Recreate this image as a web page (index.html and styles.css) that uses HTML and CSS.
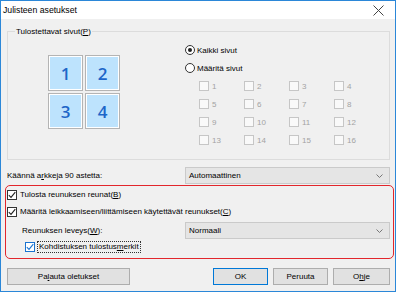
FILE: index.html
```html
<!DOCTYPE html>
<html>
<head>
<meta charset="utf-8">
<link rel="stylesheet" href="styles.css">
</head>
<body>
<div class="window">
  <div class="titlebar">
    <span class="title">Julisteen asetukset</span>
    <svg class="close" width="11" height="11" viewBox="0 0 11 11"><path d="M0.5 0.5L10.5 10.5M10.5 0.5L0.5 10.5" stroke="#444" stroke-width="1" fill="none"/></svg>
  </div>
  <div class="content">
    <fieldset class="group">
      <legend>Tulostettavat sivut(<u>P</u>)</legend>
      <div class="group-inner">
        <div class="poster">
          <div class="cell">1</div>
          <div class="cell">2</div>
          <div class="cell">3</div>
          <div class="cell">4</div>
        </div>
        <div class="pages">
          <div class="row"><span class="radio checked"></span>Kaikki sivut</div>
          <div class="row"><span class="radio"></span>Määritä sivut</div>
          <div class="page-grid">
            <div class="pcb"><span class="cb off"></span>1</div>
            <div class="pcb"><span class="cb off"></span>2</div>
            <div class="pcb"><span class="cb off"></span>3</div>
            <div class="pcb"><span class="cb off"></span>4</div>
            <div class="pcb"><span class="cb off"></span>5</div>
            <div class="pcb"><span class="cb off"></span>6</div>
            <div class="pcb"><span class="cb off"></span>7</div>
            <div class="pcb"><span class="cb off"></span>8</div>
            <div class="pcb"><span class="cb off"></span>9</div>
            <div class="pcb"><span class="cb off"></span>10</div>
            <div class="pcb"><span class="cb off"></span>11</div>
            <div class="pcb"><span class="cb off"></span>12</div>
            <div class="pcb"><span class="cb off"></span>13</div>
            <div class="pcb"><span class="cb off"></span>14</div>
            <div class="pcb"><span class="cb off"></span>15</div>
            <div class="pcb"><span class="cb off"></span>16</div>
          </div>
        </div>
      </div>
    </fieldset>
    <div class="rotate-row">
      <span>Käännä a<u>r</u>kkeja 90 astetta:</span>
      <div class="select">Automaattinen<svg class="chev" width="7" height="4" viewBox="0 0 7 4"><path d="M0.5 0.5L3.5 3.5L6.5 0.5" stroke="#777" stroke-width="1" fill="none"/></svg></div>
    </div>
    <div class="highlight">
      <div class="crow"><span class="cb on"><svg width="8" height="8" viewBox="0 0 8 8"><path d="M0.8 4.2L3 6.4L7.3 1.2" stroke="#222" stroke-width="1.1" fill="none"/></svg></span>Tulosta reunuksen reunat(<u>B</u>)</div>
      <div class="crow"><span class="cb on"><svg width="8" height="8" viewBox="0 0 8 8"><path d="M0.8 4.2L3 6.4L7.3 1.2" stroke="#222" stroke-width="1.1" fill="none"/></svg></span>Määritä leikkaamiseen/liittämiseen käytettävät reunukset(<u>C</u>)</div>
      <div class="width-row">
        <span>Reunuksen leveys(<u>W</u>):</span>
        <div class="select">Normaali<svg class="chev" width="7" height="4" viewBox="0 0 7 4"><path d="M0.5 0.5L3.5 3.5L6.5 0.5" stroke="#777" stroke-width="1" fill="none"/></svg></div>
      </div>
      <div class="crow sub"><span class="cb on blue"><svg width="8" height="8" viewBox="0 0 8 8"><path d="M0.8 4.2L3 6.4L7.3 1.2" stroke="#1a73d0" stroke-width="1.1" fill="none"/></svg></span><span class="focus">Kohdistuksen tulostus<u>m</u>erkit</span></div>
    </div>
    <div class="buttons">
      <button class="btn wide">Pa<u>l</u>auta oletukset</button>
      <div class="spacer"></div>
      <button class="btn default">OK</button>
      <button class="btn">Peruuta</button>
      <button class="btn last">O<u>h</u>je</button>
    </div>
  </div>
</div>
</body>
</html>
```
FILE: styles.css
```css
* { box-sizing: border-box; }
html, body { margin: 0; padding: 0; }
body {
  font-family: "Liberation Sans", Arial, sans-serif;
  font-size: 8px;
  color: #000;
  background: #fff;
}
.window {
  width: 396px;
  height: 292px;
  border: 1px solid #2b87d8;
  background: #f0f0f0;
  display: flex;
  flex-direction: column;
}
.titlebar {
  height: 18px;
  background: #fff;
  display: flex;
  align-items: center;
  justify-content: space-between;
  padding: 0 11px 0 2px;
  font-size: 8.7px;
}
.close { display: block; }
.content {
  padding: 7px 5px 0 6px;
  display: flex;
  flex-direction: column;
}
u { text-decoration: underline; text-underline-offset: 1px; }
.group {
  margin: 0;
  padding: 0 0 10px 0;
  border: 1px solid #dcdcdc;
  min-width: 0;
}
.group legend {
  margin-left: 7px;
  padding: 0 1px;
  line-height: 11px;
}
.group-inner {
  display: flex;
  align-items: flex-start;
}
.poster {
  margin: 18px 0 0 40px;
  display: grid;
  grid-template-columns: 35px 35px;
  grid-template-rows: 36px 36px;
  gap: 2px;
}
.cell {
  border: 1px solid #b4b4b4;
  box-shadow: inset 0 0 0 1px #fff;
  background: #bde3fd;
  color: #1e66c8;
  font-family: "Open Sans", "Noto Sans", sans-serif;
  font-weight: 600;
  font-size: 17px;
  display: flex;
  align-items: center;
  justify-content: center;
}
.pages {
  margin: 4px 0 0 65px;
  display: flex;
  flex-direction: column;
}
.row {
  height: 18px;
  display: flex;
  align-items: center;
}
.radio {
  width: 10px;
  height: 10px;
  border: 1px solid #333;
  border-radius: 50%;
  background: #fff;
  margin-right: 2px;
  display: flex;
  align-items: center;
  justify-content: center;
}
.radio.checked::after {
  content: "";
  width: 4px;
  height: 4px;
  border-radius: 50%;
  background: #222;
}
.page-grid {
  padding-left: 14px;
  display: grid;
  grid-template-columns: repeat(4, 45px);
  grid-auto-rows: 18px;
}
.pcb {
  display: flex;
  align-items: center;
  color: #a3a3a3;
}
.cb {
  width: 10px;
  height: 10px;
  border: 1px solid #333;
  background: #fff;
  margin-right: 3px;
  display: flex;
  align-items: center;
  justify-content: center;
  flex: none;
}
.cb svg { display: block; }
.cb.off { border-color: #c6c6c6; background: #f9f9f9; }
.cb.blue { border-color: #1a73d0; }
.rotate-row {
  margin-top: 7px;
  height: 17px;
  display: flex;
  align-items: center;
  justify-content: space-between;
}
.select {
  width: 205px;
  height: 17px;
  border: 1px solid #cacaca;
  background: #e5e5e5;
  display: flex;
  align-items: center;
  justify-content: space-between;
  padding: 0 6px 0 3px;
}
.chev { display: block; }
.highlight {
  margin: 1px -4px 0 -2px;
  border: 1px solid #e2262c;
  border-radius: 5px;
  padding: 0 3px 4px 1px;
  display: flex;
  flex-direction: column;
}
.crow {
  height: 17px;
  display: flex;
  align-items: center;
}
.crow.sub {
  height: 15px;
  padding-left: 18px;
}
.focus {
  outline: 1px dotted #333;
  outline-offset: 0;
  padding: 0 1px;
  line-height: 10px;
}
.width-row {
  margin-top: 2px;
  height: 17px;
  display: flex;
  align-items: center;
  justify-content: space-between;
  padding-left: 15px;
}
.buttons {
  margin-top: 9px;
  display: flex;
  align-items: center;
}
.spacer { flex: 1; }
.btn {
  font: inherit;
  color: #000;
  height: 17px;
  width: 55px;
  margin: 0 0 0 5px;
  padding: 0;
  border: 1px solid #adadad;
  background: #e1e1e1;
  border-radius: 0;
}
.btn.wide { width: 123px; margin-left: 0; }
.btn.default { border-color: #0078d7; }
.btn.last { width: 57px; }
```
